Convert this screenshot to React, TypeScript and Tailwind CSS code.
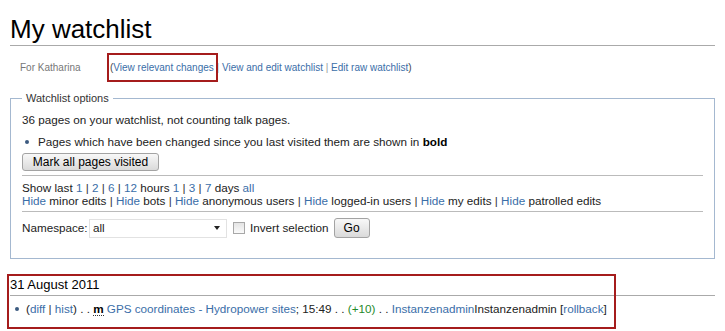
import React from "react";

const link = "text-[#3a6ea8]";

const Bar = () => <span className="text-[#333]"> | </span>;

export default function App() {
  return (
    <div className="relative w-[725px] h-[331px] overflow-hidden bg-white text-[#222] font-['Liberation_Sans',Arial,sans-serif]">
      {/* Title */}
      <h1 className="mx-[10px] mt-[14px] border-b border-[#aaa] text-[26px] leading-[31px] text-black">
        My watchlist
      </h1>

      {/* Sub heading */}
      <div className="flex items-center h-[27px] mt-[8px] text-[10px] leading-[12px] whitespace-pre">
        <span className="ml-[20px] w-[90px] text-[#777]">For Katharina</span>
        <span className="text-[#444]">(</span>
        <span className={link}>View relevant changes</span>
        <span className="text-[#999]"> | </span>
        <span className={link}>View and edit watchlist</span>
        <span className="text-[#999]"> | </span>
        <span className={link}>Edit raw watchlist</span>
        <span className="text-[#444]">)</span>
      </div>

      {/* Options */}
      <fieldset className="mx-[10px] mt-[11px] border border-[#a4b8d0] px-[11px] pt-[7px] pb-[19px] text-[11.7px]">
        <legend className="px-[4px] text-[11px] leading-[13px] text-[#333]">Watchlist options</legend>
        <p className="leading-[15px]">36 pages on your watchlist, not counting talk pages.</p>
        <ul className="mt-[7px]">
          <li className="flex items-center leading-[15px]">
            <span className="ml-[3px] w-[4px] h-[4px] rounded-full bg-[#3b5a80]" />
            <span className="ml-[9px]">
              Pages which have been changed since you last visited them are shown in <b className="text-black">bold</b>
            </span>
          </li>
        </ul>
        <button className="mt-[4px] h-[18px] w-[137px] rounded-[3px] border border-[#a3a3a3] bg-gradient-to-b from-[#f8f8f8] to-[#dadada] text-[12px] leading-[16px] text-black">
          Mark all pages visited
        </button>
        <div className="mt-[4px] h-px bg-[#bbb]" />
        <div className="mt-[5px] leading-[13px]">
          Show last <span className={link}>1</span><Bar /><span className={link}>2</span><Bar />
          <span className={link}>6</span><Bar /><span className={link}>12</span> hours{" "}
          <span className={link}>1</span><Bar /><span className={link}>3</span><Bar />
          <span className={link}>7</span> days <span className={link}>all</span>
        </div>
        <div className="leading-[13px]">
          <span className={link}>Hide</span> minor edits<Bar />
          <span className={link}>Hide</span> bots<Bar />
          <span className={link}>Hide</span> anonymous users<Bar />
          <span className={link}>Hide</span> logged-in users<Bar />
          <span className={link}>Hide</span> my edits<Bar />
          <span className={link}>Hide</span> patrolled edits
        </div>
        <div className="mt-[4px] h-px bg-[#bbb]" />
        <div className="mt-[5px] flex items-center h-[22px]">
          <span className="w-[67px]">Namespace:</span>
          <div className="flex items-center justify-between h-[19px] w-[138px] border border-[#e2e2e2] pl-[3px] pr-[6px]">
            <span>all</span>
            <span className="w-0 h-0 border-l-[3px] border-r-[3px] border-t-[4px] border-l-transparent border-r-transparent border-t-[#222]" />
          </div>
          <span className="ml-[6px] w-[12px] h-[12px] border border-[#a8a8a8] bg-gradient-to-b from-[#e4e4e4] to-[#fafafa]" />
          <span className="ml-[5px]">Invert selection</span>
          <button className="ml-[5px] h-[20px] w-[36px] rounded-[3px] border border-[#a3a3a3] bg-gradient-to-b from-[#f8f8f8] to-[#dadada] text-[12px] leading-[16px] text-black">
            Go
          </button>
        </div>
      </fieldset>

      {/* Changes */}
      <h4 className="mx-[10px] mt-[18px] border-b border-[#aaa] pb-[2px] text-[13px] leading-[16px] text-black">
        31 August 2011
      </h4>
      <ul className="mt-[5px] text-[11.7px] leading-[15px]">
        <li className="flex items-center whitespace-pre">
          <span className="ml-[15px] w-[4px] h-[4px] rounded-full bg-[#3b5a80]" />
          <span className="ml-[7px]">
            (<span className={link}>diff</span><Bar /><span className={link}>hist</span>) . .{" "}
            <b className="text-black border-b border-dotted border-[#333]">m</b>{" "}
            <span className={link}>GPS coordinates - Hydropower sites</span>; 15:49 . .{" "}
            <span className="text-[#1f8a2a]">(+10)</span> . .{" "}
            <span className={link}>Instanzenadmin</span>Instanzenadmin [<span className={link}>rollback</span>]
          </span>
        </li>
      </ul>

      {/* annotation boxes */}
      <div className="pointer-events-none absolute left-[107px] top-[53px] w-[111px] h-[29px] border-2 border-[#a51c1c]" />
      <div className="pointer-events-none absolute left-[7px] top-[274px] w-[609px] h-[55px] border-2 border-[#a51c1c]" />
    </div>
  );
}
